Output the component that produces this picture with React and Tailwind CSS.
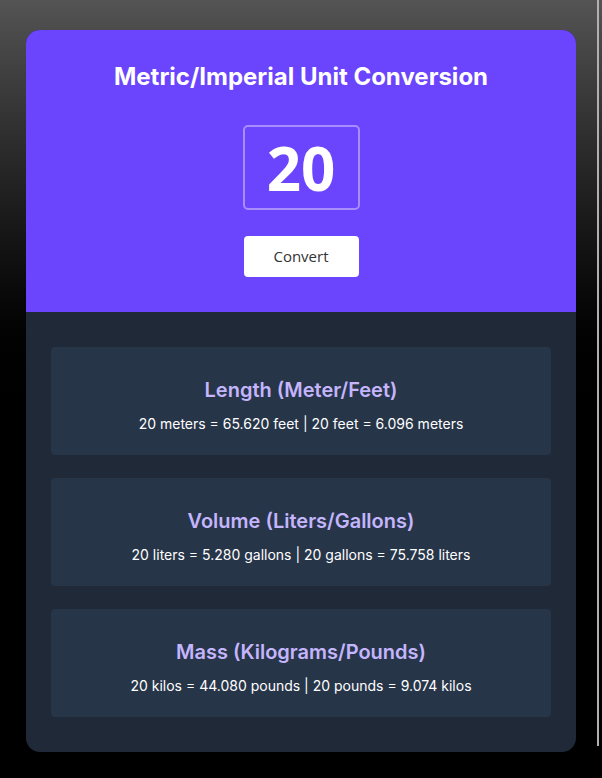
import React from 'react';

const results = [
  { title: 'Length (Meter/Feet)', text: '20 meters = 65.620 feet | 20 feet = 6.096 meters' },
  { title: 'Volume (Liters/Gallons)', text: '20 liters = 5.280 gallons | 20 gallons = 75.758 liters' },
  { title: 'Mass (Kilograms/Pounds)', text: '20 kilos = 44.080 pounds | 20 pounds = 9.074 kilos' },
];

export default function App() {
  return (
    <div className="relative min-h-[778px] bg-linear-to-b from-[#545454] to-black to-55% pt-[30px] pb-[26px] font-['Inter',sans-serif]">
      <div className="mx-[26px] w-[550px] rounded-[14px] overflow-hidden bg-[#1f2937]">
        {/* Header */}
        <div className="bg-[#6b44fe] flex flex-col items-center pt-[32px] pb-[35px]">
          <h1 className="text-white text-[24px] font-bold leading-[30px]">Metric/Imperial Unit Conversion</h1>
          <input
            defaultValue="20"
            className="mt-[33px] w-[117px] h-[85px] rounded-[5px] border-2 border-white/40 bg-transparent text-center text-white text-[60px] font-bold font-['Open_Sans',sans-serif] outline-none"
          />
          <button className="mt-[26px] w-[115px] h-[41px] rounded-[4px] bg-white text-[#333] text-[15px] font-['Open_Sans',sans-serif]">
            Convert
          </button>
        </div>

        {/* Results */}
        <div className="px-[25px] py-[35px] flex flex-col gap-[23px]">
          {results.map((r) => (
            <div key={r.title} className="h-[108px] rounded-[4px] bg-[#273549] flex flex-col items-center pt-[31px]">
              <h2 className="text-[#c4b5fd] text-[20px] font-semibold leading-[24px]">{r.title}</h2>
              <p className="mt-[12px] text-white text-[14px] leading-[20px]">{r.text}</p>
            </div>
          ))}
        </div>
      </div>

      {/* scrollbar thumb */}
      <div className="absolute top-0 right-[3px] w-[2px] h-[746px] bg-[#b0b0b0]" />
    </div>
  );
}
